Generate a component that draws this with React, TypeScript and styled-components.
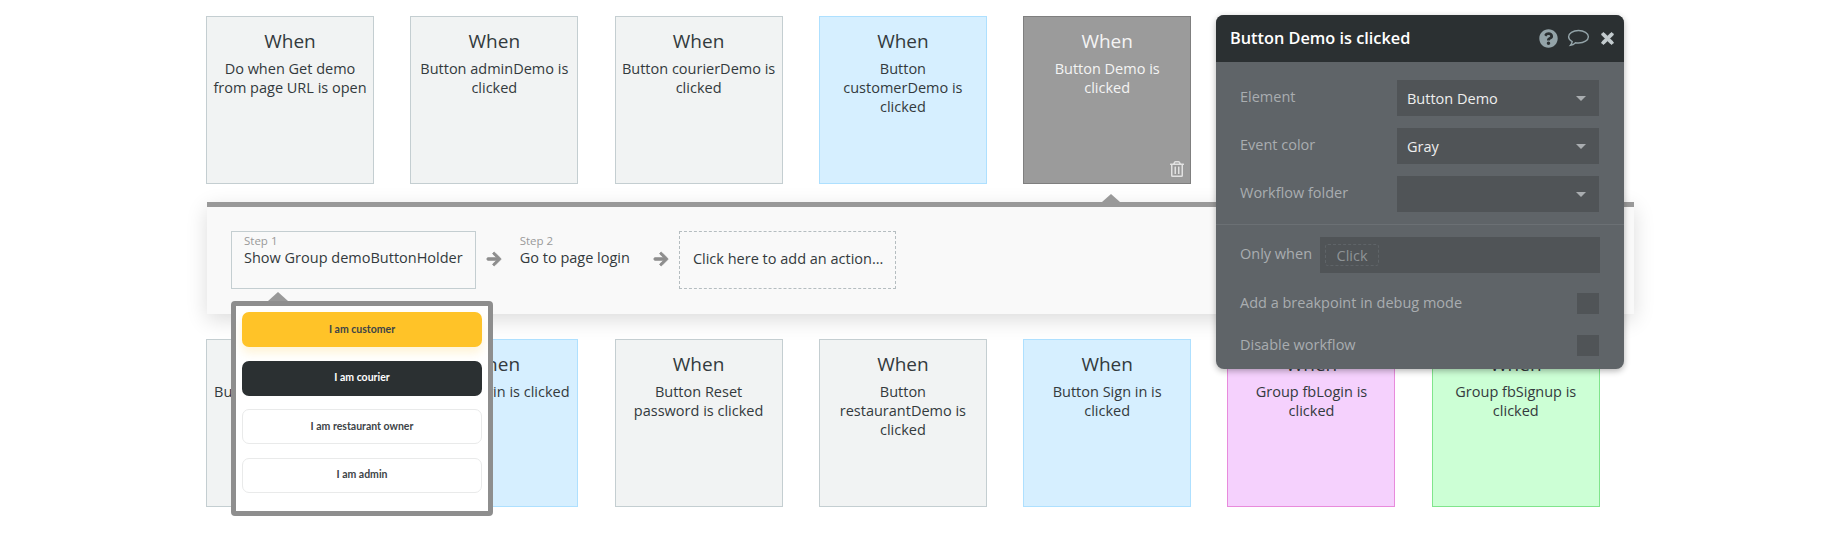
import styled, { createGlobalStyle } from 'styled-components'
import { FaArrowRight, FaQuestionCircle, FaRegTrashAlt, FaTimes } from 'react-icons/fa'

const GlobalStyle = createGlobalStyle`
    html, body {
        margin: 0;
        background: #fff;
    }
    body {
        font-family: "Open Sans", "Liberation Sans", sans-serif;
        color: #333;
    }
`

type Tone = 'plain' | 'blue' | 'pink' | 'green' | 'active'

const tones: Record<Tone, { bg: string; border: string; color: string }> = {
    plain: { bg: '#f1f3f3', border: '#c4ced1', color: '#333a3d' },
    blue: { bg: '#d6efff', border: '#aee0ff', color: '#333a3d' },
    pink: { bg: '#f5d1fd', border: '#e88bdc', color: '#333a3d' },
    green: { bg: '#ccffd5', border: '#80e58c', color: '#333a3d' },
    active: { bg: '#9b9b9b', border: '#7f7f7f', color: '#f4f4f4' },
}

const Page = styled.div`
    position: relative;
    width: 1830px;
    height: 536px;
    box-sizing: border-box;
    padding: 16px 0 0 206px;
    overflow: hidden;
`

const CardRow = styled.div`
    display: grid;
    grid-template-columns: repeat(7, 168px);
    column-gap: 36.3px;
`

const Card = styled.div<{ $tone: Tone }>`
    position: relative;
    box-sizing: border-box;
    height: 168px;
    padding: 12px 2px 0;
    text-align: center;
    background: ${props => tones[props.$tone].bg};
    border: 1px solid ${props => tones[props.$tone].border};
    color: ${props => tones[props.$tone].color};
`

const When = styled.div`
    font-size: 19px;
    line-height: 24px;
    margin-bottom: 6px;
`

const Condition = styled.div`
    font-size: 14.5px;
    line-height: 19px;
    white-space: pre-line;
`

const Trash = styled.span`
    position: absolute;
    right: 5px;
    bottom: 6px;
    display: flex;
    color: #e2e2e2;
    font-size: 16px;
`

const Panel = styled.div`
    position: relative;
    box-sizing: border-box;
    width: 1427px;
    height: 112px;
    margin: 18px 0 25px 1px;
    padding: 24px 0 0 24px;
    display: flex;
    align-items: flex-start;
    background: #f9f9f9;
    border-top: 5px solid #999;
    box-shadow: 0 6px 20px rgba(0, 0, 0, 0.14);

    &::before {
        content: '';
        position: absolute;
        left: 895px;
        top: -13px;
        border-left: 9px solid transparent;
        border-right: 9px solid transparent;
        border-bottom: 8px solid #999;
    }
`

const Step = styled.div<{ $selected?: boolean }>`
    position: relative;
    box-sizing: border-box;
    height: 58px;
    padding: 2px 12px 0;
    border: 1px solid ${props => (props.$selected ? '#c4ced1' : 'transparent')};
`

const StepLabel = styled.div`
    font-size: 11.5px;
    line-height: 14px;
    color: #9a9a9a;
`

const StepName = styled.div`
    font-size: 14.5px;
    line-height: 19px;
    color: #333a3d;
    white-space: nowrap;
`

const Arrow = styled.span<{ $after?: boolean }>`
    display: flex;
    align-items: center;
    height: 56px;
    margin: 0 ${props => (props.$after ? '10px' : '5px')} 0 10px;
    color: #8e8e8e;
    font-size: 16px;

    svg {
        stroke: currentColor;
        stroke-width: 30;
    }
`

const AddAction = styled.div`
    box-sizing: border-box;
    width: 217px;
    height: 58px;
    padding: 0 0 3px 13px;
    display: flex;
    align-items: center;
    font-size: 14.5px;
    color: #333a3d;
    border: 1px dashed #b5bdc0;
`

const Popup = styled.div`
    position: absolute;
    left: -1px;
    top: 69px;
    z-index: 2;
    box-sizing: border-box;
    width: 262px;
    height: 215px;
    padding: 6px;
    display: flex;
    flex-direction: column;
    gap: 13.5px;
    background: #fff;
    border: 5px solid #8e8e8e;
    border-radius: 4px;

    &::before {
        content: '';
        position: absolute;
        left: 32px;
        top: -14px;
        border-left: 10px solid transparent;
        border-right: 10px solid transparent;
        border-bottom: 9px solid #999;
    }
`

const DemoButton = styled.div<{ $kind: 'yellow' | 'dark' | 'outline' }>`
    box-sizing: border-box;
    height: 35px;
    padding-bottom: 2px;
    display: flex;
    align-items: center;
    justify-content: center;
    font-family: Lato, "Liberation Sans", sans-serif;
    font-size: 10.5px;
    font-weight: 700;
    border-radius: 7px;
    background: ${props => (props.$kind === 'yellow' ? '#ffc328' : props.$kind === 'dark' ? '#2b3032' : '#fff')};
    color: ${props => (props.$kind === 'dark' ? '#fff' : '#3d4447')};
    border: ${props => (props.$kind === 'outline' ? '1.5px solid #e9eaea' : 'none')};
    box-shadow: ${props => (props.$kind === 'yellow' ? '0 6px 10px rgba(255, 195, 40, 0.18)' : 'none')};
`

const Palette = styled.div`
    position: absolute;
    left: 1216px;
    top: 15px;
    z-index: 3;
    width: 408px;
    height: 354px;
    background: #5f6468;
    border-radius: 8px;
    box-shadow: 0 2px 6px rgba(0, 0, 0, 0.3);
    overflow: hidden;
`

const PaletteHeader = styled.div`
    height: 47px;
    padding: 0 8px 0 14px;
    display: flex;
    align-items: center;
    background: #2b3032;
    color: #fff;
    font-size: 16.3px;
    font-weight: 600;
`

const PaletteTitle = styled.div`
    flex: 1;
    margin-top: -1px;
`

const HeadIcon = styled.span<{ $size: number; $color: string; $gap: number }>`
    display: flex;
    margin-left: ${props => props.$gap}px;
    font-size: ${props => props.$size}px;
    color: ${props => props.$color};
`

const BoldIcon = styled(HeadIcon)`
    svg {
        stroke: currentColor;
        stroke-width: 30;
    }
`

const PaletteBody = styled.div`
    padding: 18px 25px 0 24px;
`

const FieldRow = styled.div`
    height: 36px;
    margin-bottom: 12px;
    display: flex;
    align-items: center;
    justify-content: space-between;
`

const FieldLabel = styled.div`
    font-size: 14.5px;
    color: #a9adb0;
    margin-top: -3px;
`

const Select = styled.div`
    position: relative;
    box-sizing: border-box;
    width: 202px;
    height: 36px;
    padding-left: 10px;
    display: flex;
    align-items: center;
    background: #505457;
    color: #eee;
    font-size: 14.5px;
    font-weight: 500;

    &::after {
        content: '';
        position: absolute;
        right: 13px;
        top: 16px;
        border-left: 5px solid transparent;
        border-right: 5px solid transparent;
        border-top: 5px solid #a9adb0;
    }
`

const Divider = styled.div`
    height: 1px;
    margin: 0 -25px 12px -24px;
    background: #6b7074;
`

const ConditionRow = styled(FieldRow)`
    margin-right: -1px;
    margin-bottom: 20px;
    justify-content: flex-start;
`

const ConditionInput = styled.div`
    flex: 1;
    height: 36px;
    margin-left: 8px;
    padding: 7px 5px;
    box-sizing: border-box;
    background: #505457;
`

const ClickChip = styled.div`
    box-sizing: border-box;
    width: 54px;
    height: 22px;
    display: flex;
    align-items: center;
    justify-content: center;
    font-size: 14.5px;
    color: #8e9396;
    border: 1px dashed #5f6468;
    border-radius: 3px;
`

const CheckRow = styled.div`
    height: 21px;
    margin-bottom: 21px;
    display: flex;
    align-items: center;
    justify-content: space-between;
`

const CheckBox = styled.div`
    width: 22px;
    height: 21px;
    background: #505457;
`

const topCards: { text: string; tone: Tone }[] = [
    { text: 'Do when Get demo\nfrom page URL is open', tone: 'plain' },
    { text: 'Button adminDemo is\nclicked', tone: 'plain' },
    { text: 'Button courierDemo is\nclicked', tone: 'plain' },
    { text: 'Button\ncustomerDemo is\nclicked', tone: 'blue' },
    { text: 'Button Demo is\nclicked', tone: 'active' },
]

const bottomCards: { text: string; tone: Tone }[] = [
    { text: 'Button Create account\nis clicked', tone: 'plain' },
    { text: 'Button Login is clicked', tone: 'blue' },
    { text: 'Button Reset\npassword is clicked', tone: 'plain' },
    { text: 'Button\nrestaurantDemo is\nclicked', tone: 'plain' },
    { text: 'Button Sign in is\nclicked', tone: 'blue' },
    { text: 'Group fbLogin is\nclicked', tone: 'pink' },
    { text: 'Group fbSignup is\nclicked', tone: 'green' },
]

function App() {
    return (
        <Page>
            <GlobalStyle />
            <CardRow>
                {topCards.map((card) => (
                    <Card key={card.text} $tone={card.tone}>
                        <When>When</When>
                        <Condition>{card.text}</Condition>
                        {card.tone === 'active' && (
                            <Trash>
                                <FaRegTrashAlt />
                            </Trash>
                        )}
                    </Card>
                ))}
            </CardRow>

            <Panel>
                <Step $selected>
                    <StepLabel>Step 1</StepLabel>
                    <StepName>Show Group demoButtonHolder</StepName>
                    <Popup>
                        <DemoButton $kind="yellow">I am customer</DemoButton>
                        <DemoButton $kind="dark">I am courier</DemoButton>
                        <DemoButton $kind="outline">I am restaurant owner</DemoButton>
                        <DemoButton $kind="outline">I am admin</DemoButton>
                    </Popup>
                </Step>
                <Arrow>
                    <FaArrowRight />
                </Arrow>
                <Step>
                    <StepLabel>Step 2</StepLabel>
                    <StepName>Go to page login</StepName>
                </Step>
                <Arrow $after>
                    <FaArrowRight />
                </Arrow>
                <AddAction>Click here to add an action...</AddAction>
            </Panel>

            <CardRow>
                {bottomCards.map((card) => (
                    <Card key={card.text} $tone={card.tone}>
                        <When>When</When>
                        <Condition>{card.text}</Condition>
                    </Card>
                ))}
            </CardRow>

            <Palette>
                <PaletteHeader>
                    <PaletteTitle>Button Demo is clicked</PaletteTitle>
                    <HeadIcon $size={19} $color="#93a3a8" $gap={0}>
                        <FaQuestionCircle />
                    </HeadIcon>
                    <HeadIcon $size={23} $color="#93a3a8" $gap={9}>
                        <svg width="1em" height="1em" viewBox="0 0 23 20" fill="none" stroke="currentColor" strokeWidth="1.4">
                            <path d="M11.5 2C6 2 1.6 4.7 1.6 8.2c0 2 1.4 3.7 3.6 4.9-.2 1.4-.9 2.8-1.7 3.7 1.9-.2 3.6-1.2 5-2.6.9.2 2 .3 3 .3 5.5 0 9.9-2.8 9.9-6.3S17 2 11.5 2z" />
                        </svg>
                    </HeadIcon>
                    <BoldIcon $size={17} $color="#c3cbce" $gap={9}>
                        <FaTimes />
                    </BoldIcon>
                </PaletteHeader>
                <PaletteBody>
                    <FieldRow>
                        <FieldLabel>Element</FieldLabel>
                        <Select>Button Demo</Select>
                    </FieldRow>
                    <FieldRow>
                        <FieldLabel>Event color</FieldLabel>
                        <Select>Gray</Select>
                    </FieldRow>
                    <FieldRow>
                        <FieldLabel>Workflow folder</FieldLabel>
                        <Select />
                    </FieldRow>
                    <Divider />
                    <ConditionRow>
                        <FieldLabel>Only when</FieldLabel>
                        <ConditionInput>
                            <ClickChip>Click</ClickChip>
                        </ConditionInput>
                    </ConditionRow>
                    <CheckRow>
                        <FieldLabel>Add a breakpoint in debug mode</FieldLabel>
                        <CheckBox />
                    </CheckRow>
                    <CheckRow>
                        <FieldLabel>Disable workflow</FieldLabel>
                        <CheckBox />
                    </CheckRow>
                </PaletteBody>
            </Palette>
        </Page>
    )
}

export default App
